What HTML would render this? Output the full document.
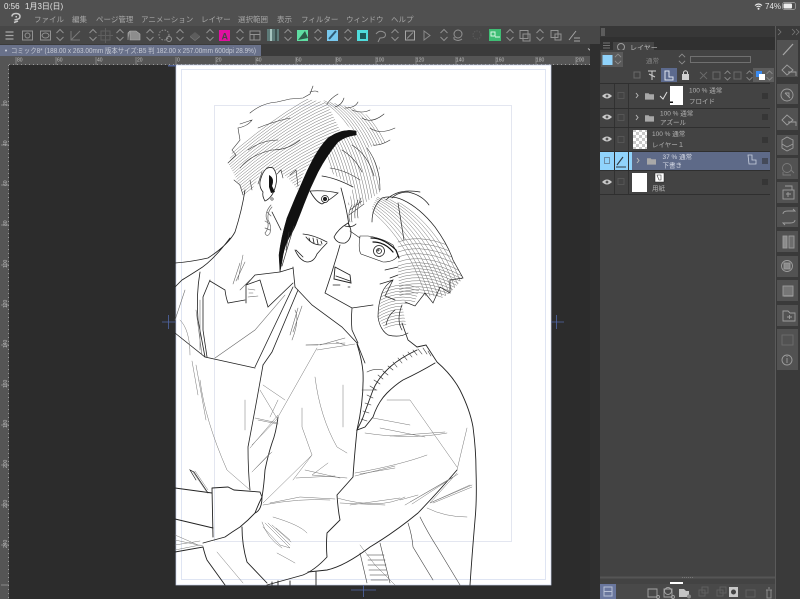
<!DOCTYPE html>
<html lang="ja"><head><meta charset="utf-8"><style>
html,body{margin:0;padding:0;background:#2c2c2c}
#w{position:relative;width:800px;height:599px;overflow:hidden;background:#2c2c2c;font-family:"Liberation Sans","Noto Sans CJK JP",sans-serif}
svg{position:absolute;left:0;top:0;filter:blur(.3px)}
text{font-family:"Liberation Sans","Noto Sans CJK JP",sans-serif}
</style></head><body><div id="w">
<svg width="800" height="599" viewBox="0 0 800 599">
<defs>
<symbol id="d" viewBox="0 0 10 18" overflow="visible"><path d="M1.5 7L5 3.5L8.5 7M1.5 11L5 14.5L8.5 11" fill="none" stroke="#8e8e8e" stroke-width="1"/></symbol>
<pattern id="chk" width="6" height="6" patternUnits="userSpaceOnUse"><rect width="6" height="6" fill="#fff"/><rect width="3" height="3" fill="#c8c8c8"/><rect x="3" y="3" width="3" height="3" fill="#c8c8c8"/></pattern>
<symbol id="eye" viewBox="0 0 12 8" overflow="visible"><path d="M1 4Q6 -1 11 4Q6 9 1 4Z" fill="#c9c9c9"/><circle cx="6" cy="4" r="1.4" fill="#555"/></symbol>
<symbol id="fd" viewBox="0 0 10 8" overflow="visible"><path d="M0 1H4L5 2H10V8H0Z" fill="#a8a8a8"/></symbol>
<clipPath id="ca"><path d="M228 163L238 138L240 127L250 113L277 102L303 98L327 103L340 130L328 138L316 155L304 172L298 190L288 178L280 172L265 168L258 178L252 190L243 195L236 178Z"/></clipPath>
<clipPath id="cb"><path d="M322 100L353 108L373 118L387 142L367 148L380 168L380 192L362 205L352 222L348 205L353 187L330 172L318 172L328 155L340 140L356 134Z"/></clipPath>
<clipPath id="cc"><path d="M372 207L377 197L393 200L417 210L440 233L453 260L463 278L450 293L433 303L420 293L400 303L398 267L397 247L385 237L372 230Z"/></clipPath>
<clipPath id="cd"><path d="M378 317L382 293L393 280L420 288L415 302L402 305L408 333L388 335Z"/></clipPath>
<path id="sa" d="M342 90Q292 106 222 168" fill="none" stroke="#707070" stroke-width=".5"/>
<path id="sb" d="M318 96Q368 116 382 205" fill="none" stroke="#707070" stroke-width=".5"/>
<path id="sc" d="M372 194Q428 216 456 296" fill="none" stroke="#707070" stroke-width=".5"/>
<path id="sd" d="M376 300Q402 282 432 300" fill="none" stroke="#707070" stroke-width=".5"/>
<path id="se" d="M398 272Q425 262 462 282" fill="none" stroke="#707070" stroke-width=".5"/>
</defs>

<!-- chrome -->
<rect width="800" height="26" fill="#505050"/>
<rect y="26" width="600" height="18" fill="#474747"/>
<rect y="44" width="800" height="12" fill="#3b3b3b"/>
<rect y="45" width="261" height="11" fill="#69718a"/>
<rect y="56" width="600" height="9" fill="#555"/>
<rect y="56" width="9" height="543" fill="#555"/>

<!-- status -->
<g fill="#e4e4e4" font-size="8">
<text x="4" y="9">0:56</text><text x="25" y="9">1月3日(日)</text>
<text x="765" y="9">74%</text></g>
<path d="M755 5.5Q758.500 2.500 762 5.500M756.500 7Q758.500 5.300 760.500 7" fill="none" stroke="#eee" stroke-width="1.100"/><circle cx="758.500" cy="8.700" r="1" fill="#eee"/>
<rect x="782.500" y="2.500" width="13" height="7" rx="2" fill="none" stroke="#aaa" stroke-width=".7"/><rect x="783.500" y="3.500" width="8.500" height="5" rx="1" fill="#eee"/>

<!-- menu -->
<path d="M12 16.500Q12 13.500 16 13.500Q20 13.500 20 16.500Q20 19 16.500 19.500L14.500 20M15.500 16.700H17M14 22.500L18 21" fill="none" stroke="#c8c8c8" stroke-width="1.500"/>
<g fill="#a6a6a6" font-size="7.500">
<text x="34" y="22">ファイル</text><text x="72" y="22">編集</text><text x="96" y="22">ページ管理</text><text x="141" y="22">アニメーション</text><text x="201" y="22">レイヤー</text><text x="238" y="22">選択範囲</text><text x="277" y="22">表示</text><text x="301" y="22">フィルター</text><text x="346" y="22">ウィンドウ</text><text x="391" y="22">ヘルプ</text></g>

<!-- toolbar -->
<path d="M5.500 32H13.500M5.500 35.500H13.500M5.500 39H13.500" stroke="#a5a5a5" stroke-width="1.300"/>
<g fill="none" stroke="#929292" stroke-width="1">
<rect x="22.500" y="31" width="10" height="9"/><circle cx="27.500" cy="35.500" r="2.500"/>
<rect x="40.500" y="31" width="10" height="9"/><ellipse cx="45.500" cy="35.500" rx="3.500" ry="2.500"/>
<path d="M71 31V40H80M71 40L80 31" stroke="#7a7a7a"/>
<rect x="101" y="31" width="9" height="9" stroke="#5f5f5f"/><path d="M105.500 28V43M98 35.500H113" stroke="#5f5f5f"/>
<circle cx="164" cy="35" r="5" stroke-dasharray="1.500 1.500"/><circle cx="169" cy="39" r="2.500"/>
<rect x="250" y="31" width="10" height="9"/><path d="M250 34.500H260M254 34.500V40"/>
<path d="M376 34Q380 29 385 33Q387 38 380 38L378 42"/>
<rect x="405.500" y="31" width="9" height="9" stroke="#a5a5a5"/><path d="M407 38.500L413 32.500"/>
<path d="M424 31L430 35.500L424 40Z" stroke="#8a8a8a"/>
<circle cx="458" cy="34" r="4"/><path d="M454 37V39Q458 42 462 39"/>
<circle cx="477" cy="35" r="4" stroke="#5d5d5d" stroke-dasharray="1.300 1.300"/>
<rect x="520" y="30.500" width="8" height="8"/><rect x="523" y="34" width="7" height="7"/>
<rect x="551" y="30.500" width="7" height="7"/><rect x="555" y="34" width="6" height="6"/>
<path d="M569 40L576 31M574 38H580M574 41H580" stroke="#a5a5a5"/>
</g>
<path d="M130 31H136L140 34V40H130Z M130 31L128 33V40" fill="#8d8d8d" stroke="#b2b2b2" stroke-width=".6"/>
<path d="M190 36L195 32L200 36L195 40Z" fill="#5c5c5c"/><path d="M190 36L195 40L200 36V37L195 41L190 37Z" fill="#777"/>
<rect x="219" y="30" width="11" height="11" fill="#e010a0"/><text x="221.500" y="39.500" font-size="9" fill="#444" font-weight="bold">A</text>
<rect x="267" y="29" width="12" height="12" fill="#5d7a78"/><rect x="270" y="29" width="2" height="12" fill="#a7c4bf"/><rect x="275" y="29" width="2" height="12" fill="#3c4f4e"/>
<rect x="297" y="30" width="11" height="11" fill="#5fdda2"/><path d="M298 40L305 31L308 38Z" fill="#2c5c48"/>
<rect x="327" y="30" width="11" height="11" fill="#78c8ee"/><path d="M329 39L336 31" stroke="#2f5a74" stroke-width="2"/>
<rect x="357" y="30" width="11" height="11" fill="#4fdcdc"/><path d="M360 33H366V39H360Z" fill="#1e5a5a"/>
<rect x="489" y="29" width="12" height="12" fill="#3fbd74"/><path d="M491 32H495V36H491ZM495 37H500" fill="none" stroke="#d8f6e4"/>
<use href="#d" x="55" y="26" width="10" height="18"/><use href="#d" x="88" y="26" width="10" height="18"/><use href="#d" x="115" y="26" width="10" height="18"/><use href="#d" x="145" y="26" width="10" height="18"/><use href="#d" x="175" y="26" width="10" height="18"/><use href="#d" x="205" y="26" width="10" height="18"/><use href="#d" x="235" y="26" width="10" height="18"/><use href="#d" x="283" y="26" width="10" height="18"/><use href="#d" x="313" y="26" width="10" height="18"/><use href="#d" x="343" y="26" width="10" height="18"/><use href="#d" x="390" y="26" width="10" height="18"/><use href="#d" x="439" y="26" width="10" height="18"/><use href="#d" x="505" y="26" width="10" height="18"/><use href="#d" x="535" y="26" width="10" height="18"/>

<!-- tab -->
<circle cx="6" cy="50.500" r="1" fill="#d0d4de"/>
<text x="11" y="53" font-size="7" fill="#c5c9d4" textLength="245" lengthAdjust="spacingAndGlyphs">コミック8* (188.00 x 263.00mm 版本サイズ:B5 判 182.00 x 257.00mm 600dpi 28.9%)</text>
<path d="M588 48.500L591 51L594 48.500" fill="none" stroke="#bbb"/>

<!-- rulers -->
<g font-size="5" fill="#bdbdbd"><text x="17" y="61.500">80</text><text x="57" y="61.500">60</text><text x="97" y="61.500">40</text><text x="137" y="61.500">20</text><text x="177" y="61.500">0</text><text x="216" y="61.500">20</text><text x="256" y="61.500">40</text><text x="296" y="61.500">60</text><text x="336" y="61.500">80</text><text x="376" y="61.500">100</text><text x="416" y="61.500">120</text><text x="456" y="61.500">140</text><text x="496" y="61.500">160</text><text x="536" y="61.500">180</text><text x="576" y="61.500">200</text>
<text x="7" y="106" transform="rotate(-90 7 106)">20</text><text x="7" y="146" transform="rotate(-90 7 146)">40</text><text x="7" y="186" transform="rotate(-90 7 186)">60</text><text x="7" y="226" transform="rotate(-90 7 226)">80</text><text x="7" y="268" transform="rotate(-90 7 268)">100</text><text x="7" y="308" transform="rotate(-90 7 308)">120</text><text x="7" y="348" transform="rotate(-90 7 348)">140</text><text x="7" y="388" transform="rotate(-90 7 388)">160</text><text x="7" y="428" transform="rotate(-90 7 428)">180</text><text x="7" y="468" transform="rotate(-90 7 468)">200</text><text x="7" y="508" transform="rotate(-90 7 508)">220</text><text x="7" y="548" transform="rotate(-90 7 548)">240</text></g>
<path d="M9 64.500H597" stroke="#9a9a9a" stroke-width="1" stroke-dasharray="1 3"/>
<path d="M16 57V65M56 57V65M96 57V65M136 57V65M176 57V65M216 57V65M256 57V65M296 57V65M336 57V65M376 57V65M416 57V65M456 57V65M496 57V65M536 57V65M576 57V65" stroke="#9a9a9a" stroke-width=".7"/>
<path d="M8.500 65V599" stroke="#9a9a9a" stroke-width="1" stroke-dasharray="1 3"/>
<path d="M1 105H9M1 145H9M1 185H9M1 225H9M1 265H9M1 305H9M1 345H9M1 385H9M1 425H9M1 465H9M1 505H9M1 545H9M1 585H9" stroke="#9a9a9a" stroke-width=".7"/>

<!-- page -->
<rect x="176" y="65" width="375" height="520" fill="#fff"/>
<rect x="176" y="65" width="375" height="520" fill="none" stroke="#c6d0ea" stroke-width=".7"/>
<rect x="181.500" y="69.500" width="364" height="510" fill="none" stroke="#dfe5f3" stroke-width="1"/>
<rect x="214.500" y="105.500" width="297" height="436" fill="none" stroke="#e3e6f0" stroke-width="1"/>
<path d="M162 322H176M168.500 315V329M551 322H564M556.500 315V329M351 590H376M363.500 585V597" stroke="#5268a8" stroke-width=".8" fill="none"/>
<rect x="168" y="65" width="8" height="1.500" fill="#4f5f8f"/>

<!-- ARTWORK -->
<g fill="none" stroke-linecap="round">
<!-- hair hatching fields -->
<g clip-path="url(#ca)">
<use href="#sa" y="-6"/><use href="#sa" y="-3"/><use href="#sa"/><use href="#sa" y="3"/><use href="#sa" y="6"/><use href="#sa" y="9"/><use href="#sa" y="12"/><use href="#sa" y="15"/><use href="#sa" y="18"/><use href="#sa" y="21"/><use href="#sa" y="24"/><use href="#sa" y="27"/><use href="#sa" y="30"/><use href="#sa" y="33"/><use href="#sa" y="36"/><use href="#sa" y="39"/><use href="#sa" y="42"/><use href="#sa" y="45"/><use href="#sa" y="48"/><use href="#sa" y="51"/><use href="#sa" y="54"/><use href="#sa" y="57"/><use href="#sa" y="60"/><use href="#sa" y="63"/><use href="#sa" y="66"/><use href="#sa" y="69"/><use href="#sa" y="72"/><use href="#sa" y="75"/><use href="#sa" y="78"/><use href="#sa" y="81"/><use href="#sa" y="84"/><use href="#sa" y="87"/>
</g>
<g clip-path="url(#cb)">
<use href="#sb" x="-42"/><use href="#sb" x="-39"/><use href="#sb" x="-36"/><use href="#sb" x="-33"/><use href="#sb" x="-30"/><use href="#sb" x="-27"/><use href="#sb" x="-24"/><use href="#sb" x="-21"/><use href="#sb" x="-18"/><use href="#sb" x="-15"/><use href="#sb" x="-12"/><use href="#sb" x="-9"/><use href="#sb" x="-6"/><use href="#sb" x="-3"/><use href="#sb"/><use href="#sb" x="3"/><use href="#sb" x="6"/><use href="#sb" x="9"/><use href="#sb" x="12"/><use href="#sb" x="15"/><use href="#sb" x="18"/><use href="#sb" x="21"/>
</g>
<g clip-path="url(#cc)">
<use href="#sc" x="-30"/><use href="#sc" x="-26"/><use href="#sc" x="-22"/><use href="#sc" x="-18"/><use href="#sc" x="-14"/><use href="#sc" x="-10"/><use href="#sc" x="-6"/><use href="#sc" x="-2"/><use href="#sc" x="2"/><use href="#sc" x="6"/><use href="#sc" x="10"/>
<use href="#se" y="-30"/><use href="#se" y="-25"/><use href="#se" y="-20"/><use href="#se" y="-15"/><use href="#se" y="-10"/><use href="#se" y="-6"/><use href="#se" y="-3"/><use href="#se"/><use href="#se" y="3"/><use href="#se" y="6"/><use href="#se" y="9"/><use href="#se" y="12"/><use href="#se" y="15"/><use href="#se" y="18"/><use href="#se" y="21"/><use href="#se" y="24"/>
</g>
<g clip-path="url(#cd)">
<use href="#sd" y="-6"/><use href="#sd" y="-3"/><use href="#sd"/><use href="#sd" y="3"/><use href="#sd" y="6"/><use href="#sd" y="9"/><use href="#sd" y="12"/><use href="#sd" y="15"/><use href="#sd" y="18"/><use href="#sd" y="21"/><use href="#sd" y="24"/><use href="#sd" y="27"/><use href="#sd" y="30"/><use href="#sd" y="33"/>
</g>
<!-- man's hair accents + wisps -->
<g stroke="#333" stroke-width=".6">
<path d="M228 163L236 155L232 150L240 140L238 128Q248 126 252 120L240 124M250 113Q262 103 277 102L290 99L303 98L310 94L313 86M310 92Q316 90 318 92M327 104Q331 98 338 94M335 107Q342 105 344 98M345 108Q355 108 358 102M352 110Q362 114 370 110M362 118Q372 124 384 114M370 128Q380 135 395 128M373 145Q380 146 390 140M367 148Q380 165 380 190"/>
<path d="M243 195L240 185L234 180M252 190L250 180M262 172L258 184M283 178L281 170L277 174M298 186L296 170L290 175"/>
<path d="M240 168Q250 155 272 150Q288 150 300 140M248 150Q262 140 278 140M258 128Q272 122 290 118M342 150Q355 158 362 172M352 145Q368 155 374 176M330 168Q345 170 360 180"/>
</g>
<!-- streak -->
<path d="M356 131Q342 128 328 138Q316 150 304 178Q295 198 287 218Q281 238 279 255L280 272Q282 262 283 255Q285 245 289 238Q295 228 297 222Q301 212 304 204Q310 188 318 172Q327 155 338 142Q346 136 356 135Z" fill="#111" stroke="#111" stroke-width=".5"/>
<path d="M294 226L282 266M289 232L286 250" stroke="#333" stroke-width=".7"/>
<!-- ear + earring -->
<path d="M261 178Q265 165 273 168Q279 175 275 188Q272 198 265 201Q262 196 263 192Q258 186 261 178Z" stroke="#222" stroke-width=".8" fill="#fff"/>
<path d="M269 175Q275 178 272 186L275 192L271 193L269 187Z" fill="#111"/>
<circle cx="272" cy="199" r="1.200" stroke="#333" stroke-width=".6"/>
<path d="M271 205Q264 213 267 220Q270 227 265 233Q267 238 270 233Q272 226 268 220Q267 212 272 207M267 212L271 216M265 221L270 224M265 228L270 230" stroke="#666" stroke-width=".7"/>
<!-- man's face -->
<g stroke="#222" stroke-width=".8">
<path d="M295 250Q300 261 307 262Q314 262 317 254Q322 248 327 243M303 234Q314 235 327 242M306 237Q312 245 321 245M309 238L310 241M313 238L314 243M317 239L318 244M321 241L322 244"/>
<path d="M341 188Q347 210 349 226M322 176Q336 178 353 187M310 191Q316 202 322 204Q330 200 338 193Q325 190 310 191"/>
<circle cx="325" cy="199" r="3.500" fill="#fff"/><circle cx="325" cy="199" r="1.700" fill="#222"/>
</g>
<path d="M352 205Q347 214 350 222M355 204Q350 212 352 222M358 200Q354 210 355 218M361 198Q356 208 358 218M350 210L362 201M349 215L364 204" stroke="#444" stroke-width=".6"/>
<!-- neck & shirt: heavy -->
<g stroke="#222" stroke-width=".8">
<path d="M245 190Q242 210 235 232Q228 245 208 258Q190 262 175 263M230 238Q212 262 198 270Q187 277 182 280L175 287M272 212L281 230"/>
<path d="M200 272Q196 295 198 320L205 357M210 280L203 297V330L207 357M210 281L225 290Q226 298 228 303L245 300"/>
<path d="M175 333L205 357L255 368M255 275L280 272L293 268M293 267L295 287M260 280L268 307L293 283M255 275L246 285V303M246 285L260 280"/>
<path d="M293 287L255 367M298 290L272 352L263 365M295 287L312 305L342 327L357 343L365 363"/>
<path d="M263 365Q256 405 248 447Q248 470 250 490M303 257L296 250"/>
</g>
<g stroke="#666" stroke-width=".55">
<path d="M285 295L255 330L215 358M238 280L243 255M233 284L240 263M236 281L245 262M240 290L250 280M248 289L255 290M249 293L253 293M248 297L258 296M295 310Q300 320 292 340M298 308L290 335M302 306L293 332M306 345L318 345M320 345L345 338M336 342L345 345M200 300V350M196 310L202 355M185 290L175 320"/>
</g>
<!-- second char face -->
<g stroke="#222" stroke-width=".8">
<path d="M340 245Q333 270 325 293L352 308L373 305M352 308Q351 320 352 330L358 343M402 323L408 340L417 347"/>
<path d="M335 267L350 275L351 283L334 279ZM336 276L350 281" stroke-width=".9"/>
<path d="M333 285H340M348 287H350" stroke-width=".7"/>
<path d="M360 236Q358 250 361 254L383 262Q395 262 398 255L393 245Q382 238 368 236ZM350 231L360 238" stroke-width=".6" fill="#fff"/>
<circle cx="379" cy="251" r="5.500" fill="#fff"/><circle cx="379" cy="251" r="2.500"/><circle cx="378" cy="250" r="1"/>
<path d="M371 238Q384 238 396 250L399 258M373 242Q385 242 393 252" stroke="#111" stroke-width="1.200"/>
<path d="M348 223Q338 229 334 237Q337 244 345 243Q351 240 351 232Q351 228 348 223ZM345 226Q352 228 356 224"/>
</g>
<!-- second char hair outline -->
<g stroke="#222" stroke-width=".7">
<path d="M372 222Q372 207 382 198Q392 195 403 200Q420 208 435 227Q448 245 453 260L463 278L450 280L450 293L440 287L433 303L425 293L415 306L405 302M392 198Q398 192 408 192Q422 195 429 205M386 200Q398 188 420 192M398 203L404 240"/>
<path d="M382 293Q378 305 378 317Q380 330 388 335Q400 338 408 333M395 310Q388 315 386 325M402 305Q396 320 402 330M393 280Q385 285 382 293M380 284L393 280L385 296L395 300M398 267L385 270M398 275L390 278"/>
</g>
<!-- body: heavy -->
<g stroke="#222" stroke-width=".9">
<path d="M357 344Q362 360 363 372Q364 400 357 430Q354 460 353 477L337 495Q338 510 340 520L327 533Q326 545 327 557Q315 570 303 575Q285 580 267 585"/>
<path d="M417 347L426 345L437 362Q452 375 460 390Q470 410 473 427Q476 450 476 470Q477 500 475 520Q472 555 470 585"/>
<path d="M417 350Q400 358 390 367Q378 378 373 390L362 420L357 430L365 427L373 417Q378 402 387 393Q395 385 403 380Q420 372 435 363"/>
<path d="M457 470Q440 490 418 513Q395 532 370 547Q345 566 327 570L308 572"/>
<path d="M278 417Q276 433 272 443Q268 455 265 470Q264 485 262 497Q258 505 255 513L248 520L240 527Q232 532 225 537L203 543"/>
<path d="M212 488L228 487L234 490L260 492L262 497M212 488L213 537M255 513Q262 510 262 497"/>
<path d="M175 488L212 493M175 519L213 528M175 552L203 547Q205 555 207 560L225 585M242 527Q242 545 247 562L267 583M272 582V585M278 581V585M290 581V585M316 572V585"/>
<path d="M196 480L190 470L194 472L208 493" stroke-width=".7"/>
<path d="M420 517Q428 533 437 547L460 585M408 523Q412 535 413 547L433 580M360 553L367 583M380 543L390 583M362 390H377M367 372Q375 368 383 370" stroke-width=".6" stroke="#444"/>
</g>
<!-- ribs -->
<path d="M370 386L376 390M374 380L380 384M378 375L383 379M383 371L388 375M388 366L393 370M393 362L397 367M398 358L402 363M403 355L407 360M408 352L412 357M413 350L417 355M418 349L422 354M423 348L427 354M428 351L431 356M367 395L373 398M365 403L371 405M363 411L369 413M361 419L367 421M367 555H384M368 560H385M368 565H386M369 570H386M370 575H387M371 580H388" stroke="#333" stroke-width=".6"/>
<!-- body: light folds -->
<g stroke="#777" stroke-width=".5">
<path d="M317 348L278 417M317 350L355 344M315 377Q320 417 337 447L347 453M343 385V427M302 408V427L312 455L293 480M312 455L263 503M328 463L312 475L347 478M263 505Q300 498 330 500M337 498Q380 510 405 497M355 473Q400 465 427 455M365 433Q410 440 447 433M373 418L410 425M387 400H410L457 467M467 428L457 470M457 473L430 503L472 485M410 502L453 477M427 508Q445 517 467 517M273 517Q300 525 307 533M277 553Q290 560 295 563M217 552L243 583M200 380Q205 420 227 470L250 490M245 400V430M255 418L278 423M250 448L278 415M252 472L270 453M260 390L278 420M270 417L278 400M180 320Q190 330 190 355"/>
<path d="M265 523L290 548L280 545L263 527M262 522Q267 538 282 548M268 523L290 545M272 525L291 542M276 528L290 540"/>
<path d="M193 472L206 491M195 471L208 490M175 540L203 546M175 545L200 541M175 550L200 545M175 535L198 545M192 361L198 395M196 365L206 420"/>
<path d="M360 545L375 565L395 585M400 500L418 495M355 476L395 466M360 474L395 468M380 428L425 437M390 436L445 432M340 503L385 505M350 505L400 498M405 505L452 478M412 504L458 474M430 503L470 485M433 503L472 487"/>
<path d="M306 345L345 343M263 385L285 400M258 420L278 424M252 445L278 418M254 470L272 452M296 478L335 476M305 470L340 478M270 503L300 497L335 499"/>
</g>
</g>

<!-- right dark strip + panel -->
<rect x="590" y="44" width="10" height="555" fill="#2f2f2f"/>
<rect x="600" y="26" width="200" height="573" fill="#3a3a3a"/>
<rect x="600" y="26" width="176" height="11" fill="#373737"/>
<rect x="601" y="28" width="4" height="8" fill="#5c5c5c"/>
<path d="M778 29L781 32L778 35M792 29L795 32L792 35M796 29L799 32L796 35" fill="none" stroke="#777" stroke-width=".8"/>
<rect x="600" y="37" width="176" height="13" fill="#303030"/>
<path d="M603 43H610M603 45.500H610M603 48H610" stroke="#8a8a8a" stroke-width=".7"/>
<rect x="613" y="42" width="41" height="10" fill="#454545"/>
<circle cx="621" cy="47" r="3.500" fill="none" stroke="#9c9c9c"/><path d="M617 50L621 53L625 50" fill="none" stroke="#9c9c9c"/>
<text x="630" y="50" font-size="7" fill="#b8b8b8">レイヤー</text>
<rect x="600" y="50" width="175" height="549" fill="#434343"/>
<rect x="601" y="52" width="22" height="15" fill="#5a5a5a"/>
<rect x="602.500" y="55" width="10" height="10" fill="#90d3fb"/>
<use href="#d" x="613" y="51" width="10" height="16"/>
<text x="646" y="63" font-size="6.500" fill="#858585">通常</text>
<use href="#d" x="677" y="51" width="10" height="16"/>
<rect x="690.500" y="56.500" width="60" height="6" fill="none" stroke="#7c7c7c" stroke-width=".8"/>
<rect x="661" y="68" width="16" height="14" fill="#5c6a8e"/>
<g fill="none" stroke="#6a6a6a"><rect x="634" y="72" width="6" height="6"/><path d="M700 72L707 79M707 72L700 79"/><rect x="713" y="72" width="7" height="7"/><rect x="734" y="72" width="7" height="7"/></g>
<path d="M648 71H656M652 71V80M649 74L655 77" stroke="#cfcfcf" fill="none"/>
<path d="M665 71H669V77H673V80H665Z" fill="none" stroke="#dce2ee"/>
<rect x="682" y="74" width="7" height="6" fill="#cfcfcf"/><path d="M683.500 74V72Q685.500 69.500 687.500 72V74" fill="none" stroke="#cfcfcf"/>
<use href="#d" x="723" y="68" width="9" height="15"/><use href="#d" x="745" y="68" width="9" height="15"/>
<rect x="753" y="68" width="21" height="14" fill="#5d5d5d"/><rect x="756" y="71" width="6" height="6" fill="#3b8bf0"/><rect x="759" y="74" width="6" height="6" fill="#fff"/><use href="#d" x="765" y="68" width="9" height="15"/>

<!-- layer rows -->
<path d="M600 83.500H770M600 108.500H770M600 127.500H770M600 151.500H770M600 170.500H770M600 194.500H770" stroke="#2f2f2f" stroke-width="1"/>
<path d="M614.500 84V194M628.500 84V194" stroke="#2d2d2d" stroke-width=".8"/>
<rect x="600" y="152" width="14" height="18" fill="#90d3fb"/><rect x="615" y="152" width="13" height="18" fill="#90d3fb"/>
<rect x="629" y="152" width="141" height="18" fill="#5e6a88"/><rect x="629" y="152" width="3" height="18" fill="#90d3fb"/>
<use href="#eye" x="601" y="92" width="12" height="8"/><use href="#eye" x="601" y="113" width="12" height="8"/><use href="#eye" x="601" y="135" width="12" height="8"/><use href="#eye" x="601" y="178" width="12" height="8"/>
<rect x="604.500" y="157.500" width="5" height="6" fill="none" stroke="#6d8ca3"/>
<path d="M617 165L623 157M616 167H626" stroke="#2f3a42" stroke-width="1.100"/>
<g fill="none" stroke="#5b5b5b" stroke-width=".8"><rect x="618" y="92.500" width="6" height="6"/><rect x="618" y="114.500" width="6" height="6"/><rect x="618" y="136.500" width="6" height="6"/><rect x="618" y="178.500" width="6" height="6"/></g>
<path d="M636 93L638 95.500L636 98M636 115L638 117.500L636 120M637 158L639 160.500L637 163" fill="none" stroke="#b5b5b5"/>
<use href="#fd" x="645" y="92" width="9" height="8"/><use href="#fd" x="645" y="114" width="9" height="8"/><use href="#fd" x="647" y="157" width="9" height="8"/>
<path d="M660 96L663 99L667 92" fill="none" stroke="#ddd"/>
<rect x="670" y="86" width="13" height="19" fill="#fff"/><rect x="670" y="101.500" width="3" height="1.500" fill="#111"/>
<rect x="633" y="130" width="14" height="19" fill="url(#chk)"/>
<rect x="632" y="173" width="15" height="19" fill="#fff"/>
<rect x="655" y="173" width="9" height="9" fill="#fff" stroke="#222" stroke-width=".5"/><path d="M657 175H661V180H659Z" fill="none" stroke="#333" stroke-width=".6"/>
<g font-size="6.500" fill="#b2b2b2">
<text x="689" y="92.500">100 % 通常</text><text x="689" y="103.500">フロイド</text>
<text x="660" y="115.500">100 % 通常</text><text x="660" y="124.500">アズール</text>
<text x="652" y="136">100 % 通常</text><text x="652" y="147">レイヤー１</text>
<text x="662.500" y="159" fill="#d3d7e2">37 % 通常</text><text x="662.500" y="167.500" fill="#d3d7e2">下書き</text>
<text x="652" y="190.500">用紙</text></g>
<path d="M748 155H752V160H756V164H749Z" fill="none" stroke="#c9d0de" stroke-width=".8"/>
<g stroke="#2a2a2a" stroke-width=".9"><path d="M762 94H768M762 96H768M762 98H768M762 115H768M762 117H768M762 119H768M762 138H768M762 140H768M762 142H768M762 159H768M762 161H768M762 163H768M762 180H768M762 182H768M762 184H768"/></g>

<!-- panel bottom -->
<path d="M600 577.500H775" stroke="#555" stroke-width="2"/>
<path d="M682 577.500H694" stroke="#777" stroke-width="1" stroke-dasharray="1 1"/>
<rect x="670" y="582" width="13" height="2" fill="#fff"/>
<rect x="600" y="584" width="175" height="15" fill="#494949"/>
<rect x="600" y="584" width="16" height="15" fill="#6a779e"/><rect x="604" y="587" width="8" height="9" fill="none" stroke="#b8c0d5"/><path d="M604 591.500H612" stroke="#b8c0d5"/>
<g fill="none" stroke="#a5a5a5" stroke-width=".9"><path d="M648 589H657V597H648Z"/><circle cx="658" cy="597" r="1.500"/><circle cx="668" cy="591" r="3.500"/><path d="M664 589H672V597H664Z"/><circle cx="673" cy="597" r="1.500"/></g>
<path d="M679 589H684L686 591H689V597H679Z" fill="#c4c4c4"/><circle cx="689" cy="596.500" r="2" fill="#888"/>
<g fill="none" stroke="#5f5f5f"><rect x="699" y="590" width="6" height="6"/><rect x="702" y="587" width="6" height="6"/><rect x="717" y="590" width="6" height="6"/><rect x="720" y="587" width="6" height="6"/><rect x="746" y="590" width="9" height="7"/></g>
<rect x="729" y="587" width="9" height="10" fill="#c8c8c8"/><circle cx="733.500" cy="592" r="2.500" fill="#444"/>
<path d="M766 590H772M767 590V598H771V590M768 588H770" fill="none" stroke="#8c8c8c"/>

<!-- right strip -->
<rect x="775" y="26" width="1" height="573" fill="#5a5a5a"/>
<g fill="#525252"><rect x="777" y="40" width="21" height="37"/><rect x="777" y="84" width="21" height="20"/><rect x="777" y="108" width="21" height="22"/><rect x="777" y="135" width="21" height="20"/><rect x="777" y="158" width="21" height="21"/><rect x="777" y="182" width="21" height="21"/><rect x="777" y="207" width="21" height="20"/><rect x="777" y="231" width="21" height="21"/><rect x="777" y="256" width="21" height="21"/><rect x="777" y="280" width="21" height="21"/><rect x="777" y="305" width="21" height="21"/><rect x="777" y="329" width="21" height="41"/></g>
<g fill="none" stroke="#9d9d9d" stroke-width=".9">
<path d="M783 55L793 44" stroke="#a5a5a5" stroke-width="1.300"/>
<path d="M782 70L787 65L793 70L787 75Z"/><path d="M788 72H796V76"/>
<circle cx="787" cy="95" r="6"/><path d="M785 93H789V97M785 93L790 98"/>
<path d="M782 120L787 115L793 120L787 125Z"/><path d="M788 122H796V126"/>
<path d="M782 140L787 137L793 140V148L787 151L782 148Z M782 144L787 147L793 144"/>
<circle cx="787" cy="168" r="4.500" stroke="#7b7b7b"/><path d="M783 172V175H791M791 170L794 173" stroke="#7b7b7b"/>
<rect x="783" y="190" width="11" height="9"/><path d="M785 186H792V190M788 192V197M786 194H791"/>
<path d="M783 214Q783 211 788 211H795L793 209M795 220Q795 223 790 223H783L785 225"/>
<rect x="783" y="236" width="4" height="12" fill="#8b8b8b"/><rect x="789" y="236" width="5" height="12" fill="#6e6e6e"/>
<circle cx="787" cy="266" r="5.500"/><rect x="784" y="263" width="6" height="6" fill="#8a8a8a"/>
<rect x="783" y="286" width="10" height="10" fill="#767676"/><path d="M784 296H793" stroke="#b0b0b0"/>
<path d="M783 311H788L790 313H795V321H783Z"/><path d="M787 317H792M789.500 315V319"/>
<rect x="782" y="335" width="11" height="10" stroke="#6c6c6c"/>
<circle cx="787" cy="360" r="5"/><path d="M787 358V363M787 356V357"/>
</g>
</svg>
</div></body></html>
